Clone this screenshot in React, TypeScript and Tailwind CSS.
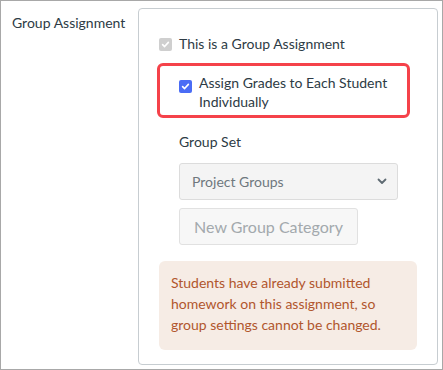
import React from "react";

function Check({ color }: { color: string }) {
  return (
    <span
      className="inline-flex items-center justify-center w-[13px] h-[13px] rounded-[2px] shrink-0"
      style={{ backgroundColor: color }}
    >
      <svg width="9" height="9" viewBox="0 0 10 10">
        <path d="M1.8 5.2 L4 7.3 L8.2 2.6" fill="none" stroke="white" strokeWidth="1.8" strokeLinecap="round" strokeLinejoin="round" />
      </svg>
    </span>
  );
}

export default function App() {
  return (
    <div
      className="w-[443px] h-[370px] border border-[#a8a8a8] bg-white flex text-[#2d3b45] text-[14px]"
      style={{ fontFamily: "Lato, 'Open Sans', sans-serif" }}
    >
      <div className="w-[137px] pl-[11px] pt-[12px] leading-[20px] shrink-0">Group Assignment</div>
      <div className="mt-[7px] w-[300px] h-[357px] border border-[#c7cdd1] rounded-[4px] pl-[20px] pr-[19px] pt-[25px]">
        <div className="flex items-center gap-[7px] leading-[20px]">
          <Check color="#cfcfcf" />
          <span>This is a Group Assignment</span>
        </div>
        <div className="mt-[9px] -ml-[2px] w-[253px] h-[55px] border-[3px] border-[#f5424a] rounded-[6px] pl-[19px] pt-[7px] flex items-start gap-[7px] leading-[19px]">
          <span className="mt-[3px]"><Check color="#4a6cf5" /></span>
          <span className="w-[200px]">Assign Grades to Each Student Individually</span>
        </div>
        <div className="pl-[20px]">
          <div className="mt-[14px] leading-[20px]">Group Set</div>
          <div className="mt-[11px] w-[219px] h-[37px] bg-[#f4f4f4] border border-[#dcdcdc] rounded-[3px] flex items-center justify-between pl-[12px] pr-[10px] text-[#6f787e]">
            <span>Project Groups</span>
            <svg width="10" height="7" viewBox="0 0 10 7">
              <path d="M1.5 1.5 L5 5 L8.5 1.5" fill="none" stroke="#5f6b73" strokeWidth="1.8" strokeLinecap="round" strokeLinejoin="round" />
            </svg>
          </div>
          <div className="mt-[8px] w-[179px] h-[37px] bg-[#f7f7f7] border border-[#e1e1e1] rounded-[3px] flex items-center justify-center text-[16px] text-[#a3a9ad]">
            New Group Category
          </div>
        </div>
        <div className="mt-[16px] w-[258px] bg-[#f6ece5] rounded-[6px] pl-[12px] pr-[8px] pt-[11px] pb-[15px] leading-[21px] text-[#b1562d]">
          Students have already submitted homework on this assignment, so group settings cannot be changed.
        </div>
      </div>
    </div>
  );
}
